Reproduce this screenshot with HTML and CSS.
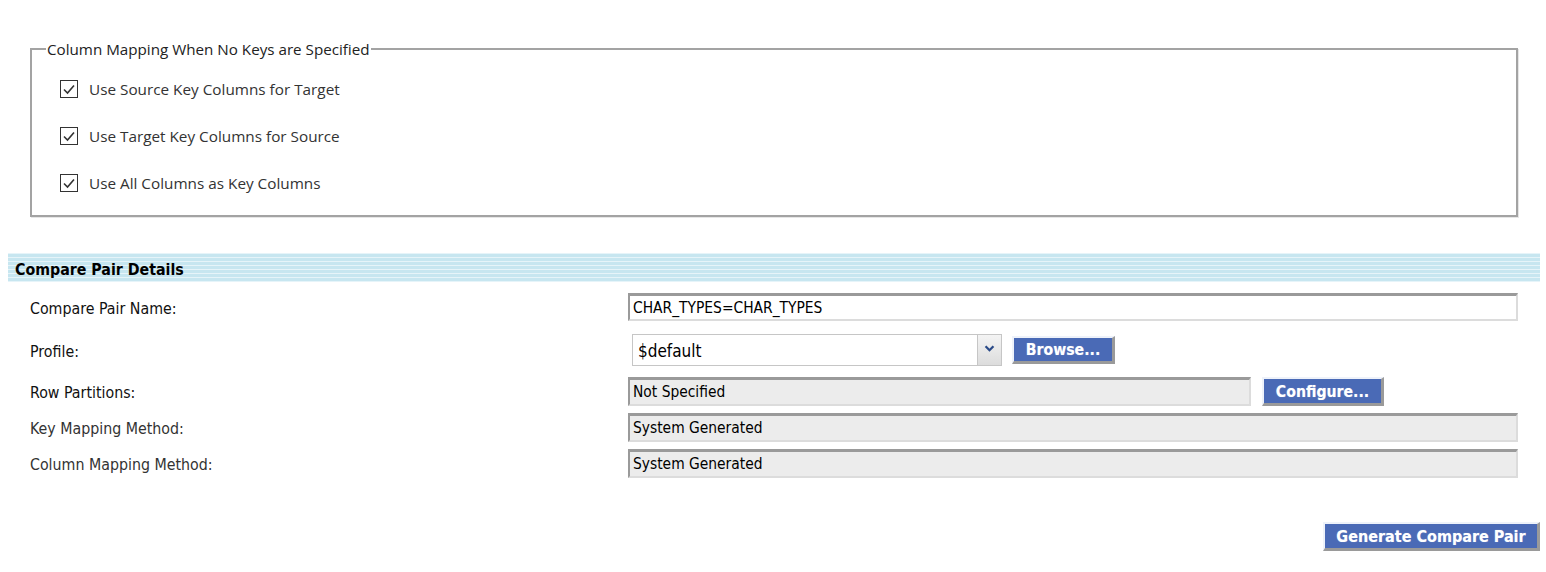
FILE: index.html
```html
<!DOCTYPE html>
<html>
<head>
<meta charset="utf-8">
<link rel="stylesheet" href="styles.css">
</head>
<body>
<div class="page">
  <fieldset class="mapping">
    <legend class="mapping-legend">Column Mapping When No Keys are Specified</legend>
    <label class="check-row"><span class="check-box"><svg viewBox="0 0 18 18" width="18" height="18"><path d="M4 9.5 L7.5 13 L14 5.5" fill="none" stroke="#333" stroke-width="1.6"/></svg></span><span class="check-text">Use Source Key Columns for Target</span></label>
    <label class="check-row"><span class="check-box"><svg viewBox="0 0 18 18" width="18" height="18"><path d="M4 9.5 L7.5 13 L14 5.5" fill="none" stroke="#333" stroke-width="1.6"/></svg></span><span class="check-text">Use Target Key Columns for Source</span></label>
    <label class="check-row"><span class="check-box"><svg viewBox="0 0 18 18" width="18" height="18"><path d="M4 9.5 L7.5 13 L14 5.5" fill="none" stroke="#333" stroke-width="1.6"/></svg></span><span class="check-text">Use All Columns as Key Columns</span></label>
  </fieldset>

  <div class="section-head">Compare Pair Details</div>

  <div class="details">
    <div class="row row-name">
      <div class="label">Compare Pair Name:</div>
      <div class="field"><div class="text-input wide white">CHAR_TYPES=CHAR_TYPES</div></div>
    </div>
    <div class="row row-profile">
      <div class="label">Profile:</div>
      <div class="field">
        <div class="select">
          <span class="select-value">$default</span>
          <span class="select-btn"><svg viewBox="0 0 12 8" width="11" height="7"><path d="M1.5 1.5 L6 6 L10.5 1.5" fill="none" stroke="#2a4a88" stroke-width="2.6"/></svg></span>
        </div>
        <button class="btn btn-browse">Browse...</button>
      </div>
    </div>
    <div class="row row-part">
      <div class="label">Row Partitions:</div>
      <div class="field">
        <div class="text-input part grey">Not Specified</div>
        <button class="btn btn-config">Configure...</button>
      </div>
    </div>
    <div class="row row-key">
      <div class="label dim">Key Mapping Method:</div>
      <div class="field"><div class="text-input wide grey">System Generated</div></div>
    </div>
    <div class="row row-col">
      <div class="label dim">Column Mapping Method:</div>
      <div class="field"><div class="text-input wide grey">System Generated</div></div>
    </div>
  </div>

  <div class="actions">
    <button class="btn btn-generate">Generate Compare Pair</button>
  </div>
</div>
</body>
</html>
```

FILE: styles.css
```css
html, body {
  margin: 0;
  padding: 0;
  background: #ffffff;
}

.page {
  width: 1546px;
  padding-top: 39px;
  font-family: "DejaVu Sans Condensed", "DejaVu Sans", sans-serif;
  color: #000;
}

.mapping {
  margin: 0 28px 0 30px;
  padding: 6px 0 9px 28px;
  border: 2px solid #a3a3a3;
  box-shadow: 1px 1px 0 #e6e6e6;
  min-width: 0;
}

.mapping-legend {
  font-family: "Open Sans", "Noto Sans", sans-serif;
  font-size: 15.2px;
  color: #222;
  padding: 0 1px;
  margin-left: -14px;
  line-height: 20px;
}

.check-row {
  display: flex;
  align-items: center;
  height: 47px;
  gap: 11px;
}

.check-box {
  width: 18px;
  height: 18px;
  box-sizing: border-box;
  border: 1px solid #333;
  display: flex;
  align-items: center;
  justify-content: center;
  background: #fff;
}

.check-box svg {
  display: block;
  flex: none;
}

.check-text {
  font-family: "Open Sans", "Noto Sans", sans-serif;
  font-size: 15.3px;
  color: #333;
}

.section-head {
  margin: 36px 6px 0 8px;
  height: 29px;
  box-sizing: border-box;
  display: flex;
  align-items: center;
  padding-left: 7px;
  padding-top: 3px;
  font-weight: bold;
  font-size: 15.8px;
  background: repeating-linear-gradient(to bottom, #e6f4f9 0px, #e6f4f9 1px, #c7e6f0 1px, #c7e6f0 4px);
}

.details {
  display: flex;
  flex-direction: column;
  margin-top: 11px;
}

.row {
  display: grid;
  grid-template-columns: 628px 1fr;
  align-items: center;
}

.row-name { height: 28px; }
.row-profile { height: 32px; margin-top: 13px; }
.row-part { height: 29px; margin-top: 11px; }
.row-key { height: 29px; margin-top: 7px; }
.row-col { height: 29px; margin-top: 7px; }

.label {
  padding-left: 30px;
  font-size: 15.8px;
  color: #111;
  padding-top: 2px;
}

.label.dim {
  color: #333;
}

.field {
  display: flex;
  align-items: center;
  height: 100%;
}

.text-input {
  box-sizing: border-box;
  height: 100%;
  display: flex;
  align-items: center;
  padding-left: 3px;
  font-size: 15.4px;
  border-top: 3px solid #9a9a9a;
  border-left: 2px solid #9a9a9a;
  border-right: 2px solid #dcdcdc;
  border-bottom: 2px solid #dcdcdc;
}

.text-input.white { background: #fff; }
.text-input.grey { background: #ececec; }
.text-input.wide { width: 890px; }
.text-input.part { width: 623px; }

.select {
  box-sizing: border-box;
  margin-left: 4px;
  width: 370px;
  height: 32px;
  display: flex;
  border: 1px solid #c6c6c6;
  background: #fff;
}

.select-value {
  flex: 1;
  display: flex;
  align-items: center;
  padding-left: 5px;
  font-size: 17px;
  padding-top: 2px;
  border-right: 1px solid #c6c6c6;
}

.select-btn {
  width: 23px;
  display: flex;
  justify-content: center;
  padding-top: 10px;
  background: linear-gradient(to bottom, #f4f4f4, #dcdcdc);
}

.select-btn svg {
  display: block;
}

.btn {
  box-sizing: border-box;
  font-family: "DejaVu Sans Condensed", "DejaVu Sans", sans-serif;
  font-weight: bold;
  font-size: 15.7px;
  color: #fff;
  background: #4a6ab6;
  border-top: 2px solid #eef2fa;
  border-left: 2px solid #eef2fa;
  border-right: 3px solid #9a9a9a;
  border-bottom: 3px solid #9a9a9a;
  height: 28px;
  padding: 0;
  display: flex;
  align-items: center;
  justify-content: center;
  text-shadow: 0 0 1px rgba(255,255,255,0.4);
}

.btn-browse {
  margin-left: 10px;
  width: 103px;
}

.btn-config {
  margin-left: 11px;
  width: 122px;
  height: 29px;
}

.actions {
  display: flex;
  justify-content: flex-end;
  padding-right: 6px;
  margin-top: 44px;
}

.btn-generate {
  width: 217px;
  height: 29px;
  font-size: 16px;
}
```
